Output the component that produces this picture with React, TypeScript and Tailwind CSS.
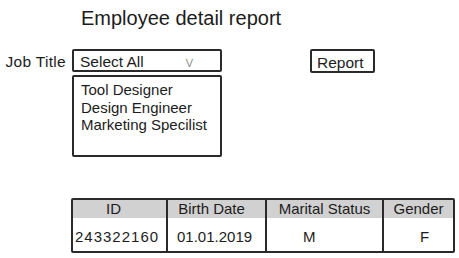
const jobTitles = ["Tool Designer", "Design Engineer", "Marketing Specilist"];

const columns = [
  { label: "ID", width: "w-[93px] pr-[12px]" },
  { label: "Birth Date", width: "w-[99px] pr-[10px]" },
  { label: "Marital Status", width: "w-[117px]" },
  { label: "Gender", width: "flex-1" },
];

export default function App() {
  return (
    <div className="h-[258px] w-[459px] overflow-hidden bg-white font-['Liberation_Sans',sans-serif] text-[#1c1c1c]">
      <h1 className="pl-[81px] pt-[6px] text-[20px] leading-[24px]">Employee detail report</h1>

      <div className="mt-[19px] flex items-start">
        <div className="w-[72px] pr-[6px] pt-[5px] text-right text-[15.5px] leading-[16px] tracking-[0.3px]">Job Title</div>

        <div className="w-[150px]">
          <div className="flex h-[23px] items-baseline rounded-[2px] border-2 border-[#2a2a2a] pl-[6px] pt-[3px] text-[15.5px] leading-[16px]">
            <span>Select All</span>
            <span className="ml-auto mr-[27px] text-[11px] text-[#8a8a8a]">V</span>
          </div>
          <div className="mt-[3px] h-[82px] rounded-[2px] border-2 border-[#2a2a2a] pl-[7px] pt-[4px] text-[15px] leading-[17.5px]">
            {jobTitles.map((t) => (
              <div key={t}>{t}</div>
            ))}
          </div>
        </div>

        <button
          type="button"
          className="ml-[88px] h-[24px] w-[65px] rounded-[2px] border-2 border-[#2a2a2a] pl-[5px] pt-[3px] text-left text-[15.5px] leading-[16px]"
        >
          Report
        </button>
      </div>

      <div className="ml-[71px] mt-[41px] w-[384px] rounded-[2px] border-2 border-[#2a2a2a]">
        <div className="flex h-[18px] bg-[#d1d1d1] text-[15px] leading-[18px]">
          {columns.map((c, i) => (
            <div
              key={c.label}
              className={`${c.width} text-center ${i > 0 ? "border-l-2 border-[#2a2a2a]" : ""}`}
            >
              {c.label}
            </div>
          ))}
        </div>
        <div className="flex h-[33px] text-[15px] leading-[28px]">
          <div className="w-[93px] pl-[2px] pt-[5px] tracking-[1px]">243322160</div>
          <div className="w-[99px] border-l-2 border-[#2a2a2a] pl-[9px] pt-[5px]">01.01.2019</div>
          <div className="w-[117px] border-l-2 border-[#2a2a2a] pl-[36px] pt-[5px]">M</div>
          <div className="flex-1 border-l-2 border-[#2a2a2a] pl-[36px] pt-[5px]">F</div>
        </div>
      </div>
    </div>
  );
}
